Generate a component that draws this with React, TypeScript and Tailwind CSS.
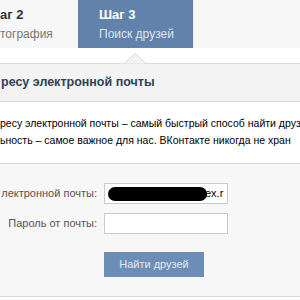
export default function App() {
  return (
    <div className="h-[300px] w-[300px] overflow-hidden bg-white text-[11px] text-black" style={{ fontFamily: '"Liberation Sans", Arial, sans-serif' }}>
      {/* steps */}
      <div className="flex h-[48px] bg-[#f7f7f7]">
        <div className="w-[78px] shrink-0 pt-[7px]">
          <div className="text-[13px] font-bold leading-[16px] text-[#333]">аг 2</div>
          <div className="mt-[3px] text-[12px] leading-[16px] text-[#777]">тография</div>
        </div>
        <div className="w-[115px] shrink-0 bg-[#6182aa] pl-[21px] pt-[7px]">
          <div className="text-[13px] font-bold leading-[16px] text-white">Шаг 3</div>
          <div className="mt-[3px] text-[12px] leading-[16px] text-[#dde5ef]">Поиск друзей</div>
        </div>
        <div className="flex-1 border-l border-[#eeeeee]" />
      </div>

      <div className="relative h-[15px] bg-white">
        <svg className="absolute left-[124px] top-[5px]" width="22" height="11" viewBox="0 0 22 11">
          <path d="M0 10.5 L11 0.5 L22 10.5" fill="#f3f3f3" stroke="#d8d8d8" />
        </svg>
      </div>

      {/* header */}
      <div className="flex h-[38px] items-center border-t border-[#dcdcdc] bg-[#f3f3f3] pl-[1px]">
        <div className="text-[12.5px] font-bold text-[#2f4256]">ресу электронной почты</div>
      </div>

      {/* info */}
      <div className="h-[62px] whitespace-nowrap border-t border-[#d9d9d9] pt-[13px] text-[10.5px] leading-[17px]">
        <div>ресу электронной почты – самый быстрый способ найти друз</div>
        <div>ьность – самое важное для нас. ВКонтакте никогда не хран</div>
      </div>

      {/* form */}
      <div className="h-[134px] border-y border-[#d9d9d9] bg-[#f7f7f7] pt-[19px] text-[#555]">
        <div className="flex items-center">
          <div className="w-[97px] shrink-0 whitespace-nowrap text-right">лектронной почты:</div>
          <div className="relative ml-[7px] flex h-[21px] w-[124px] items-center border border-[#c3cbd4] bg-white pl-[3px]">
            <div className="h-[14px] w-[99px] rounded-full bg-black" />
            <span className="-ml-[2px] text-[11px] text-black">ex.r</span>
          </div>
        </div>
        <div className="mt-[9px] flex items-center">
          <div className="w-[97px] shrink-0 whitespace-nowrap text-right">Пароль от почты:</div>
          <div className="ml-[7px] h-[21px] w-[124px] border border-[#c3cbd4] bg-white" />
        </div>
        <div className="ml-[104px] mt-[18px]">
          <button type="button" className="h-[25px] w-[100px] bg-[#6c8db5] text-[11px] text-[#e3eaf3]">
            Найти друзей
          </button>
        </div>
      </div>
    </div>
  );
}
